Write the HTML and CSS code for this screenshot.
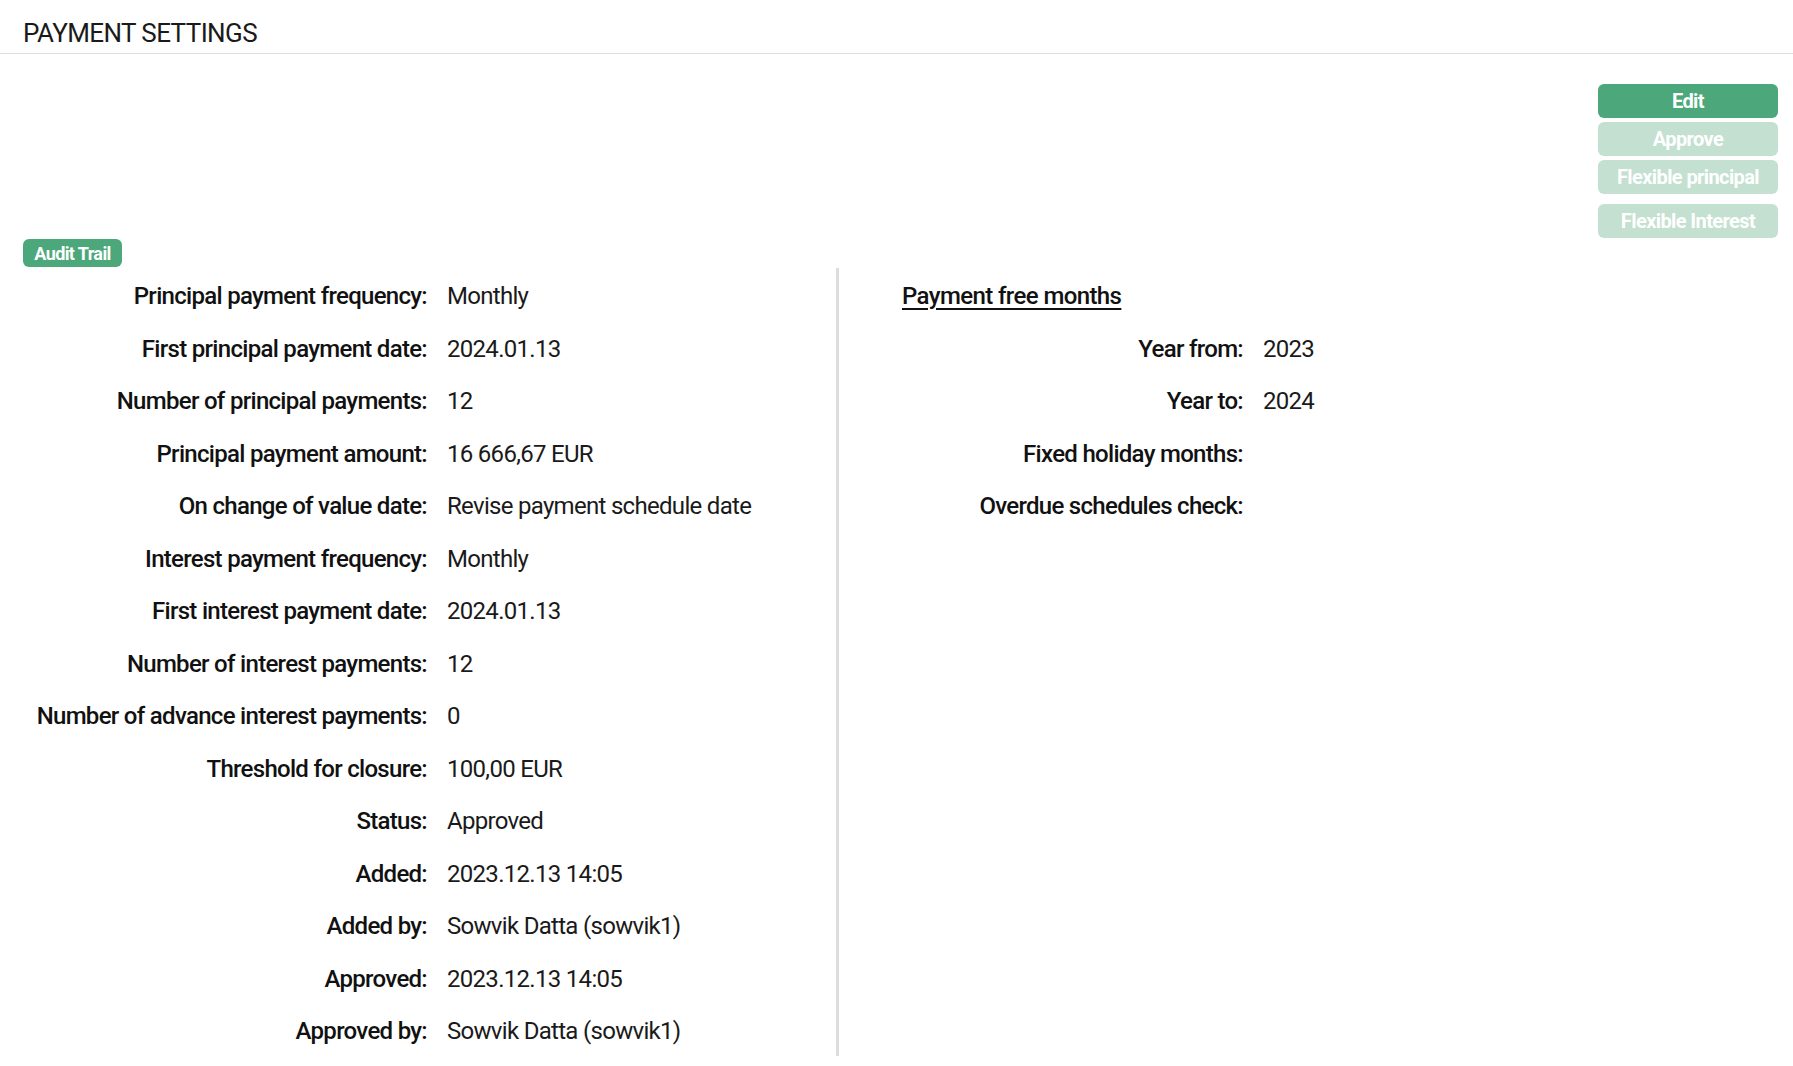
FILE: index.html
```html
<!DOCTYPE html>
<html lang="en">
<head>
    <meta charset="UTF-8">
    <title>Payment settings</title>
    <link rel="stylesheet" href="styles.css">
</head>
<body>
<div class="page-header">
    <h1>PAYMENT SETTINGS</h1>
</div>

<div class="content">
    <!-- Кнопки действий -->
    <div class="actions">
        <button class="btn">Edit</button>
        <button class="btn disabled">Approve</button>
        <button class="btn disabled">Flexible principal</button>
        <button class="btn disabled btn-gap">Flexible Interest</button>
    </div>

    <a href="javascript:void(0);" class="badge">Audit Trail</a>

    <div class="details">
        <!-- Левая колонка -->
        <div class="detail-col detail-left">
            <div class="label">Principal payment frequency:</div>
            <div class="value">Monthly</div>
            <div class="label">First principal payment date:</div>
            <div class="value">2024.01.13</div>
            <div class="label">Number of principal payments:</div>
            <div class="value">12</div>
            <div class="label">Principal payment amount:</div>
            <div class="value">16 666,67 EUR</div>
            <div class="label">On change of value date:</div>
            <div class="value">Revise payment schedule date</div>
            <div class="label">Interest payment frequency:</div>
            <div class="value">Monthly</div>
            <div class="label">First interest payment date:</div>
            <div class="value">2024.01.13</div>
            <div class="label">Number of interest payments:</div>
            <div class="value">12</div>
            <div class="label">Number of advance interest payments:</div>
            <div class="value">0</div>
            <div class="label">Threshold for closure:</div>
            <div class="value">100,00 EUR</div>
            <div class="label">Status:</div>
            <div class="value">Approved</div>
            <div class="label">Added:</div>
            <div class="value">2023.12.13 14:05</div>
            <div class="label">Added by:</div>
            <div class="value">Sowvik Datta (sowvik1)</div>
            <div class="label">Approved:</div>
            <div class="value">2023.12.13 14:05</div>
            <div class="label">Approved by:</div>
            <div class="value">Sowvik Datta (sowvik1)</div>
        </div>

        <!-- Правая колонка -->
        <div class="detail-col detail-right">
            <div class="section-title">Payment free months</div>
            <div class="label">Year from:</div>
            <div class="value">2023</div>
            <div class="label">Year to:</div>
            <div class="value">2024</div>
            <div class="label">Fixed holiday months:</div>
            <div class="value"></div>
            <div class="label">Overdue schedules check:</div>
            <div class="value"></div>
        </div>
    </div>
</div>
</body>
</html>
```

FILE: styles.css
```css
body {
    font-family: Roboto, 'Noto Sans', sans-serif;
    margin: 0;
    background-color: #fff;
    color: #111;
}

/* Заголовок страницы */
.page-header {
    height: 54px;
    padding: 18px 15px 0 23px;
    box-sizing: border-box;
    border-bottom: 1px solid #ddd;
}

.page-header h1 {
    margin: 0;
    font-size: 26px;
    font-weight: 400;
    line-height: 30px;
    letter-spacing: -0.6px;
    color: #1a1a1a;
}

.content {
    padding: 0 15px 0 23px;
}

/* Кнопки справа */
.actions {
    display: flex;
    flex-direction: column;
    align-items: flex-end;
    gap: 4px;
    margin-top: 30px;
}

.btn {
    width: 180px;
    height: 34px;
    border: none;
    border-radius: 6px;
    background-color: #4ca87a;
    color: white;
    font-family: Roboto, sans-serif;
    font-size: 20px;
    font-weight: 700;
    letter-spacing: -0.6px;
    cursor: pointer;
}

.btn.disabled {
    background-color: #c3e0d1;
    cursor: default;
}

.btn-gap {
    margin-top: 6px;
}

.badge {
    display: flex;
    align-items: center;
    justify-content: center;
    width: 99px;
    height: 28px;
    margin-top: 1px;
    border-radius: 6px;
    background-color: #4ca87a;
    color: white;
    text-decoration: none;
    font-size: 18px;
    font-weight: 700;
    letter-spacing: -0.6px;
}

/* Две колонки с данными */
.details {
    display: flex;
    margin-top: 1px;
}

.detail-col {
    display: grid;
    column-gap: 20px;
    grid-auto-rows: 52.5px;
    font-size: 24px;
    line-height: 52.5px;
    align-content: start;
}

.detail-col > div {
    padding-top: 2px;
}

.detail-left {
    width: 816px;
    box-sizing: border-box;
    grid-template-columns: 404px 1fr;
    border-right: 3px solid #ddd;
}

.detail-right {
    padding-left: 63px;
    grid-template-columns: 341px 1fr;
}

.label {
    text-align: right;
    font-weight: 500;
    letter-spacing: -0.7px;
    white-space: nowrap;
}

.value {
    font-weight: 400;
    letter-spacing: -0.7px;
    color: #1a1a1a;
    white-space: nowrap;
}

.section-title {
    grid-column: 1 / -1;
    font-weight: 500;
    letter-spacing: -0.6px;
    text-decoration: underline;
    text-underline-offset: 4px;
}
```
